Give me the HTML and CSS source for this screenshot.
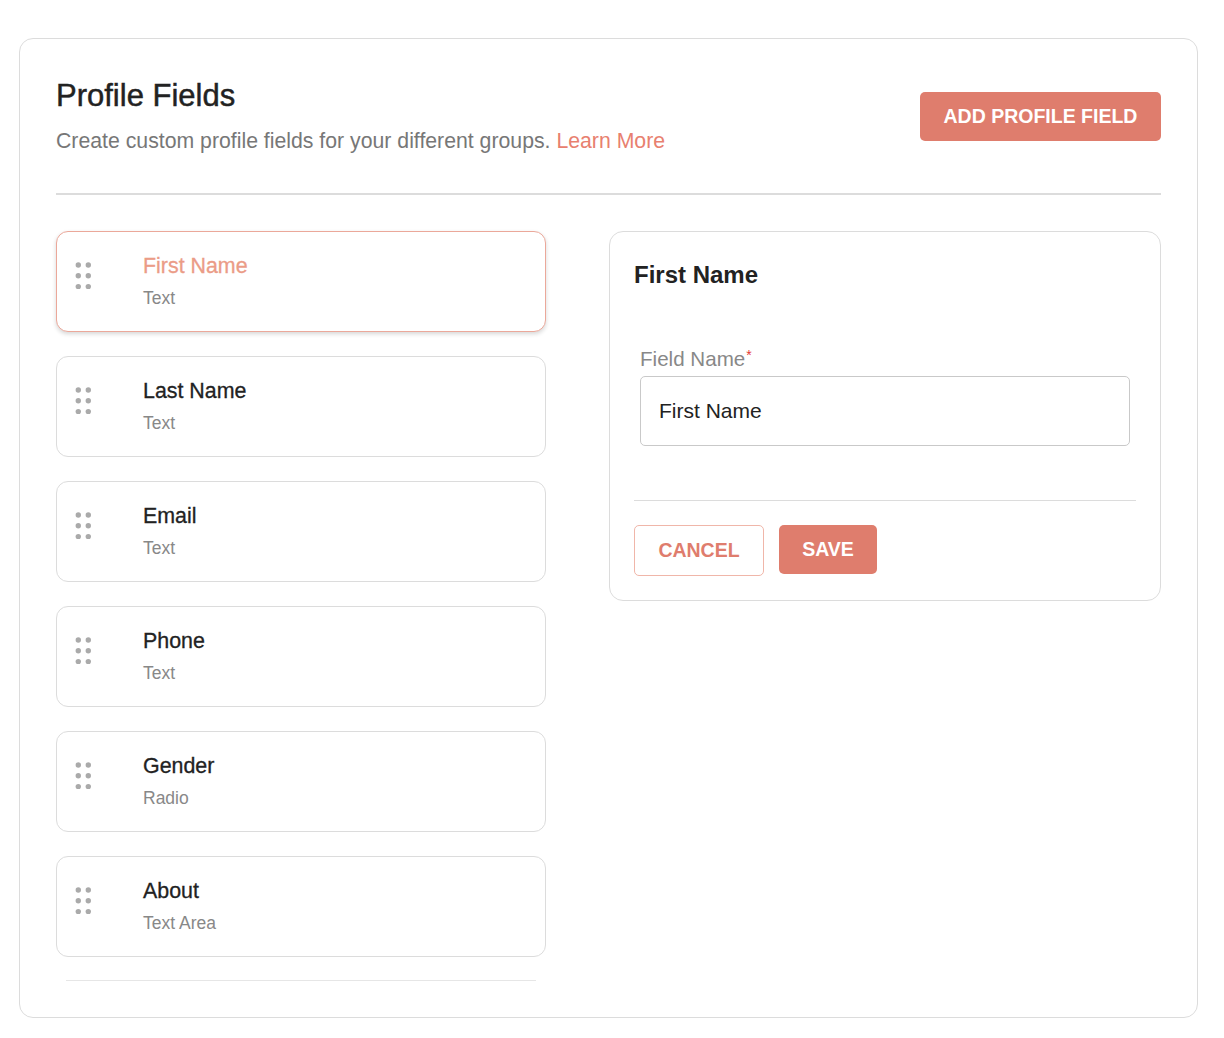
FILE: index.html
```html
<!DOCTYPE html>
<html lang="en">
<head>
<meta charset="utf-8">
<title>Profile Fields</title>
<link rel="stylesheet" href="styles.css">
</head>
<body>
<div class="card">
  <div class="header">
    <div class="head-text">
      <h1 class="title">Profile Fields</h1>
      <p class="subtitle">Create custom profile fields for your different groups. <a class="link" href="#">Learn More</a></p>
    </div>
    <button class="btn btn-primary btn-add">ADD PROFILE FIELD</button>
  </div>
  <div class="body">
    <div class="list-col">
      <div class="list">
        <div class="item item-active">
          <svg class="grip" width="17" height="28" viewBox="0 0 17 28"><g fill="#aaaaaa"><circle cx="3.3" cy="4" r="2.7"/><circle cx="13.3" cy="4" r="2.7"/><circle cx="3.3" cy="14.8" r="2.7"/><circle cx="13.3" cy="14.8" r="2.7"/><circle cx="3.3" cy="25.6" r="2.7"/><circle cx="13.3" cy="25.6" r="2.7"/></g></svg>
          <div class="item-text"><div class="item-name">First Name</div><div class="item-type">Text</div></div>
        </div>
        <div class="item">
          <svg class="grip" width="17" height="28" viewBox="0 0 17 28"><g fill="#aaaaaa"><circle cx="3.3" cy="4" r="2.7"/><circle cx="13.3" cy="4" r="2.7"/><circle cx="3.3" cy="14.8" r="2.7"/><circle cx="13.3" cy="14.8" r="2.7"/><circle cx="3.3" cy="25.6" r="2.7"/><circle cx="13.3" cy="25.6" r="2.7"/></g></svg>
          <div class="item-text"><div class="item-name">Last Name</div><div class="item-type">Text</div></div>
        </div>
        <div class="item">
          <svg class="grip" width="17" height="28" viewBox="0 0 17 28"><g fill="#aaaaaa"><circle cx="3.3" cy="4" r="2.7"/><circle cx="13.3" cy="4" r="2.7"/><circle cx="3.3" cy="14.8" r="2.7"/><circle cx="13.3" cy="14.8" r="2.7"/><circle cx="3.3" cy="25.6" r="2.7"/><circle cx="13.3" cy="25.6" r="2.7"/></g></svg>
          <div class="item-text"><div class="item-name">Email</div><div class="item-type">Text</div></div>
        </div>
        <div class="item">
          <svg class="grip" width="17" height="28" viewBox="0 0 17 28"><g fill="#aaaaaa"><circle cx="3.3" cy="4" r="2.7"/><circle cx="13.3" cy="4" r="2.7"/><circle cx="3.3" cy="14.8" r="2.7"/><circle cx="13.3" cy="14.8" r="2.7"/><circle cx="3.3" cy="25.6" r="2.7"/><circle cx="13.3" cy="25.6" r="2.7"/></g></svg>
          <div class="item-text"><div class="item-name">Phone</div><div class="item-type">Text</div></div>
        </div>
        <div class="item">
          <svg class="grip" width="17" height="28" viewBox="0 0 17 28"><g fill="#aaaaaa"><circle cx="3.3" cy="4" r="2.7"/><circle cx="13.3" cy="4" r="2.7"/><circle cx="3.3" cy="14.8" r="2.7"/><circle cx="13.3" cy="14.8" r="2.7"/><circle cx="3.3" cy="25.6" r="2.7"/><circle cx="13.3" cy="25.6" r="2.7"/></g></svg>
          <div class="item-text"><div class="item-name">Gender</div><div class="item-type">Radio</div></div>
        </div>
        <div class="item">
          <svg class="grip" width="17" height="28" viewBox="0 0 17 28"><g fill="#aaaaaa"><circle cx="3.3" cy="4" r="2.7"/><circle cx="13.3" cy="4" r="2.7"/><circle cx="3.3" cy="14.8" r="2.7"/><circle cx="13.3" cy="14.8" r="2.7"/><circle cx="3.3" cy="25.6" r="2.7"/><circle cx="13.3" cy="25.6" r="2.7"/></g></svg>
          <div class="item-text"><div class="item-name">About</div><div class="item-type">Text Area</div></div>
        </div>
      </div>
      <div class="list-end"></div>
    </div>
    <div class="panel">
      <h2 class="panel-title">First Name</h2>
      <div class="field">
        <label class="field-label">Field Name<span class="req">*</span></label>
        <div class="input">First Name</div>
      </div>
      <div class="panel-divider"></div>
      <div class="actions">
        <button class="btn btn-outline">CANCEL</button>
        <button class="btn btn-primary btn-save">SAVE</button>
      </div>
    </div>
  </div>
</div>
</body>
</html>
```

FILE: styles.css
```css
* { box-sizing: border-box; }
html, body { margin: 0; padding: 0; background: #ffffff; }
body {
  font-family: "Liberation Sans", Arial, Helvetica, sans-serif;
  color: #222222;
}
.card {
  width: 1179px;
  margin: 38px 0 0 19px;
  border: 1px solid #dcdcdc;
  border-radius: 14px;
  padding: 39px 36px 36px 36px;
  background: #fff;
}
.header {
  display: flex;
  justify-content: space-between;
  align-items: flex-start;
  padding-bottom: 40px;
  border-bottom: 2px solid #dcdcdc;
}
.title {
  margin: 0;
  font-size: 31px;
  line-height: 36px;
  font-weight: 400;
  -webkit-text-stroke: 0.45px #222;
  color: #222;
}
.subtitle {
  margin: 15px 0 0 0;
  font-size: 21.25px;
  line-height: 24px;
  color: #777777;
}
.link { color: #e8806f; text-decoration: none; }
.btn {
  font-family: "Liberation Sans", Arial, Helvetica, sans-serif;
  font-weight: 700;
  font-size: 19.5px;
  border-radius: 5px;
  cursor: pointer;
  display: flex;
  align-items: center;
  justify-content: center;
}
.btn-primary {
  background: #df7d6d;
  color: #ffffff;
  border: none;
}
.btn-add {
  margin-top: 14px;
  height: 49px;
  width: 241px;
  padding: 0;
}
.body {
  display: grid;
  grid-template-columns: 490px 552px;
  column-gap: 63px;
  align-items: start;
  margin-top: 36px;
}
.list {
  display: flex;
  flex-direction: column;
  gap: 24px;
}
.item {
  height: 101px;
  border: 1px solid #dcdcdc;
  border-radius: 12px;
  display: flex;
  align-items: flex-start;
  padding: 0 0 0 18px;
  background: #fff;
}
.item-active {
  border-color: #eba89a;
  box-shadow: 0 2px 4px rgba(0,0,0,0.16);
}
.grip { margin-top: 29px; flex: none; }
.item-text { margin-left: 51px; padding-top: 22px; }
.item-name {
  font-size: 21.4px;
  line-height: 24px;
  color: #222;
  -webkit-text-stroke: 0.3px #222;
}
.item-active .item-name { color: #eb9c87; -webkit-text-stroke: 0.3px #eb9c87; }
.item-type {
  margin-top: 10px;
  font-size: 17.5px;
  line-height: 20px;
  color: #888888;
}
.list-end {
  margin: 23px 10px 0 10px;
  height: 1px;
  background: #e6e6e6;
}
.panel {
  border: 1px solid #dcdcdc;
  border-radius: 14px;
  padding: 29px 24px 24px 24px;
}
.panel-title {
  margin: 0;
  font-size: 24px;
  line-height: 28px;
  font-weight: 700;
  color: #222;
}
.field { margin: 59px 6px 0 6px; }
.field-label {
  display: block;
  font-size: 20.6px;
  line-height: 22px;
  color: #888888;
}
.req {
  color: #e53935;
  font-size: 14px;
  vertical-align: top;
  line-height: 14px;
  margin-left: 1px;
}
.input {
  margin-top: 6px;
  height: 70px;
  border: 1px solid #c9c9c9;
  border-radius: 5px;
  padding: 0 18px;
  display: flex;
  align-items: center;
  font-size: 21px;
  color: #222;
}
.panel-divider {
  margin-top: 54px;
  height: 1px;
  background: #dcdcdc;
}
.actions {
  display: flex;
  gap: 15px;
  align-items: flex-start;
  margin-top: 24px;
}
.btn-outline {
  height: 51px;
  width: 130px;
  background: #fff;
  color: #df7d6d;
  border: 1px solid #f0b6a9;
  padding: 0;
}
.btn-save {
  height: 49px;
  width: 98px;
  padding: 0;
}
```
